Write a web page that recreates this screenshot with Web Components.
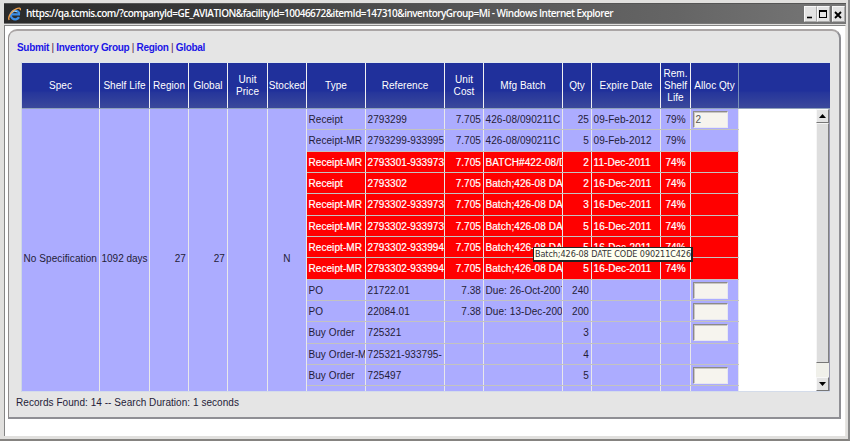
<!DOCTYPE html>
<html lang="en">
<head>
<meta charset="utf-8">
<title>Allocation</title>
<style>
html,body{margin:0;padding:0;width:850px;height:441px;overflow:hidden;background:#fff;font-family:"Liberation Sans",Arial,sans-serif}
</style>
</head>
<body>
<app-window></app-window>
<script>
const define=(name,css,html,ready)=>customElements.define(name,class extends HTMLElement{
  connectedCallback(){
    if(this.shadowRoot)return;
    const t=document.createElement('template');
    t.innerHTML='<style>*{box-sizing:border-box}'+css+'</style>'+html;
    this.attachShadow({mode:'open'}).appendChild(t.content.cloneNode(true));
    if(ready)ready.call(this,this.shadowRoot);
  }
});
const COLS='78px 50px 39px 39px 40px 39px 59px 79px 39px 79px 29px 69px 30px 48px';

/* single line of text, letter-spaced to the width given in "fit" */
define('fit-text',':host{display:inline-block;white-space:pre;letter-spacing:0}','<slot></slot>',function(){
  const want=parseFloat(this.getAttribute('fit'));
  if(!want)return;
  const have=this.getBoundingClientRect().width,n=this.textContent.length;
  this.style.letterSpacing=((want-have)/n)+'px';
});

define('window-button',
 ':host{display:block;width:12px;height:16px;background:#e3e3e3;border:1px solid #f8f8f8;border-right-color:#aaa;border-bottom-color:#aaa}svg{display:block}',
 '<svg width="10" height="14" viewBox="0 0 10 14" fill="none" stroke="#000"></svg>',
 function(r){
  const k={min:'<path d="M2 10.5h5" stroke-width="1.6"/>',max:'<rect x="1.5" y="4.5" width="7" height="6"/><path d="M1 4h8" stroke-width="2"/>',close:'<path d="M2 5l6 6M8 5l-6 6" stroke-width="1.9"/>'};
  r.querySelector('svg').innerHTML=k[this.getAttribute('kind')];
 });

define('title-bar',
 `:host{display:flex;align-items:center;height:21px;padding:0 1px 0 4px;background:linear-gradient(90deg,#2a2a2a 0,#383838 22%,#4b4b4b 42%,#5a5a5a 62%,#656565 80%,#777 100%);color:#fff;border-top:1px solid #555;border-bottom:1px solid #777}
 svg{flex:none;margin-right:5px}.t{flex:1;font:600 10px/19px "Open Sans",sans-serif;margin-top:-1px;white-space:nowrap}
 .b{display:flex}.b window-button:last-child{margin-left:2px}.b window-button{width:13px}`,
 `<svg width="13" height="14" viewBox="0 0 13 14" fill="none"><path d="M11 10.1A4.4 4.4 0 1 1 11 5.8L10.9 7.4H4" stroke="#3c8fe8" stroke-width="2.3"/><path d="M4.3 5.3Q6.5 3 9 4.9" stroke="#a8dcff"/><path d="M1.2 13C-.7 10 4 3.5 8.1 1.9C11.3.4 12.8 1.1 12.2 3.2" stroke="#f0a04a" stroke-width="1.4"/></svg>
 <span class="t"><fit-text fit="587">https://qa.tcmis.com/?companyId=GE_AVIATION&amp;facilityId=10046672&amp;itemId=147310&amp;inventoryGroup=Mi - Windows Internet Explorer</fit-text></span>
 <span class="b"><window-button kind="min"></window-button><window-button kind="max"></window-button><window-button kind="close"></window-button></span>`);

define('link-bar',
 ':host{display:block;padding-left:8px;height:31px;font:700 10px/34px "Liberation Sans",sans-serif;color:#1b16e6;white-space:nowrap}i{font-style:normal;font-weight:400;color:#502050}',
 '<fit-text fit="188">Submit<i> | </i>Inventory Group<i> | </i>Region<i> | </i>Global</fit-text>');

define('grid-header',
 `:host{display:grid;grid-template-columns:${COLS};height:47px;background:linear-gradient(#20309b 0 62%,#26369b 66%,#2d3c9b 78%,#35439b 90%,#3b499b);border-top:1px solid #dfe6ee;border-bottom:1px solid #90a2bb;color:#fff;font-size:10px;line-height:12.3px;letter-spacing:.05px}
 div{display:flex;align-items:center;justify-content:center;text-align:center;white-space:pre;border-right:1px solid #f0f0f2;padding-top:1px}div:last-child{border-right-color:#7890b8}`,
 ['Spec','Shelf Life','Region','Global','Unit\nPrice','Stocked','Type','Reference','Unit\nCost','Mfg Batch','Qty','Expire Date','Rem.\nShelf\nLife','Alloc Qty'].map(h=>'<div>'+h+'</div>').join(''));

define('grid-cell',
 `:host{display:block;min-width:0;overflow:hidden;white-space:nowrap;border-right:1px solid #e8e8ea;padding:0 1.5px 0 1.5px;line-height:21.4px;letter-spacing:.07px}
 :host([right]){text-align:right;padding-right:2px}:host([center]){text-align:center}`,
 '<slot></slot>');

define('qty-field',
 ':host{display:block;width:35px;height:17px;margin:2px 0 0 0;background:#f6f4ee;border:1px solid;border-color:#8c8a88 #e8e8f0 #e8e8f0 #8c8a88;box-shadow:inset 1px 1px #c9c6c4;padding-left:2px;line-height:15px;color:#555}',
 '<slot></slot>');

define('grid-row',
 `:host{display:grid;grid-template-columns:59px 79px 39px 79px 29px 69px 30px 48px;grid-template-rows:100%;height:21.33px;border-bottom:1px solid #c3c3c0;background:#acacff;color:#241c38}
 :host([alert]){background:#f00;color:#fff}:host([alert]) grid-cell{-webkit-text-stroke:.2px #fff}`,
 '',
 function(r){
  const v=this.getAttribute('values').split('|'),right=[2,4];
  v.forEach((t,i)=>{
   const c=document.createElement('grid-cell');
   if(right.includes(i))c.setAttribute('right','');
   if(i===6)c.setAttribute('center','');
   if(i===7&&t!=='-'){const f=document.createElement('qty-field');f.textContent=t;c.append(f)}
   else if(i<7)c.textContent=t;
   r.append(c);
  });
 });

define('scroll-bar',
 `:host{display:flex;flex-direction:column;width:14px;height:282px;background:#f0f0ea;border-right:1px solid #9a9ab0}
 .k{height:14px;background:#e4e4e4;border:1px solid #f8f8f8;border-right-color:#777;border-bottom-color:#777;display:flex;align-items:center;justify-content:center}
 .th{height:240px;background:#dedede;border:1px solid #f6f6f6;border-right-color:#808080;border-bottom:1px solid #777}.tr{flex:1}svg{display:block}`,
 '<div class="k"><svg width="7" height="4"><path d="M0 4L3.5 0L7 4z"/></svg></div><div class="th"></div><div class="tr"></div><div class="k"><svg width="7" height="4"><path d="M0 0L3.5 4L7 0z"/></svg></div>');

const R=[
 ['Receipt','2793299','7.705','426-08/090211C','25','09-Feb-2012','79%','2'],
 ['Receipt-MR','2793299-933995','7.705','426-08/090211C','5','09-Feb-2012','79%','-'],
 ['Receipt-MR','2793301-933973','7.705','BATCH#422-08/D','2','11-Dec-2011','74%','-',1],
 ['Receipt','2793302','7.705','Batch;426-08 DA','2','16-Dec-2011','74%','-',1],
 ['Receipt-MR','2793302-933973','7.705','Batch;426-08 DA','3','16-Dec-2011','74%','-',1],
 ['Receipt-MR','2793302-933973','7.705','Batch;426-08 DA','5','16-Dec-2011','74%','-',1],
 ['Receipt-MR','2793302-933994','7.705','Batch;426-08 DA','5','16-Dec-2011','74%','-',1],
 ['Receipt-MR','2793302-933994','7.705','Batch;426-08 DA','5','16-Dec-2011','74%','-',1],
 ['PO','21722.01','7.38','Due: 26-Oct-2007','240','','',''],
 ['PO','22084.01','7.38','Due: 13-Dec-200','200','','',''],
 ['Buy Order','725321','','','3','','',''],
 ['Buy Order-M','725321-933795-','','','4','','','-'],
 ['Buy Order','725497','','','5','','',''],
 ['','','','','','','','-']];

define('grid-body',
 `:host{display:grid;grid-template-columns:78px 50px 39px 39px 40px 39px 432px 1fr 14px;height:283px;background:#fff;overflow:hidden;font-size:10px;color:#241c38;border-bottom:1px solid #d4dcea}
 grid-cell.s{background:#acacff;padding-top:139px}.rows{overflow:hidden;height:282px}`,
 `<grid-cell class="s"><fit-text fit="73.5">No Specification</fit-text></grid-cell><grid-cell class="s"><fit-text fit="46">1092 days</fit-text></grid-cell><grid-cell class="s" right>27</grid-cell><grid-cell class="s" right>27</grid-cell><grid-cell class="s"></grid-cell><grid-cell class="s" center>N</grid-cell>
 <div class="rows">${R.map(r=>`<grid-row ${r[8]?'alert':''} values="${r.slice(0,8).join('|')}"></grid-row>`).join('')}</div><span></span><scroll-bar></scroll-bar>`);

define('tool-tip',
 ':host{display:block;position:absolute;left:533px;top:247px;width:160px;height:15px;background:#fffff0;border:1px solid #222;border-right-width:2px;border-bottom-width:2px;padding-left:1px;font:9px/13px "DejaVu Sans Condensed","DejaVu Sans",sans-serif;color:#333;white-space:nowrap}',
 '<fit-text fit="156">Batch;426-08 DATE CODE 090211C426</fit-text>');

define('content-panel',
 `:host{display:block;width:833px;height:390px;background:#e5e5e5;border:1px solid #8f8b8b;border-top:2px solid #aaa5a5;border-right:2px solid #8f8f94;border-bottom:2px solid #8f8f94;border-radius:9px 9px 0 0}
 .g{width:809px;margin-left:12px;border-left:1px solid #cfd8e4}
 .f{padding-left:7px;font-size:10px;line-height:21px;color:#241c38}`,
 '<link-bar></link-bar><div class="g"><grid-header></grid-header><grid-body></grid-body></div><div class="f"><fit-text fit="223">Records Found: 14 -- Search Duration: 1 seconds</fit-text></div>');

define('app-window',
 `:host{display:block;position:relative;width:850px;height:441px;box-sizing:border-box;background:#e1e0de;border-right:2px solid #8a8a8a;border-bottom:2px solid #858380;padding:3px 0 0 4px;overflow:hidden}
 title-bar{width:842px;box-sizing:border-box}
 content-panel{box-sizing:border-box}
 .c{width:842px;height:411px;margin-top:1px;background:#fff;border-top:1px solid #858585;border-left:1px solid #858585;border-right:1px solid #e8e6e2;padding:3px 0 0 3px}`,
 '<title-bar></title-bar><div class="c"><content-panel></content-panel></div><tool-tip></tool-tip>');
</script>
</body>
</html>
